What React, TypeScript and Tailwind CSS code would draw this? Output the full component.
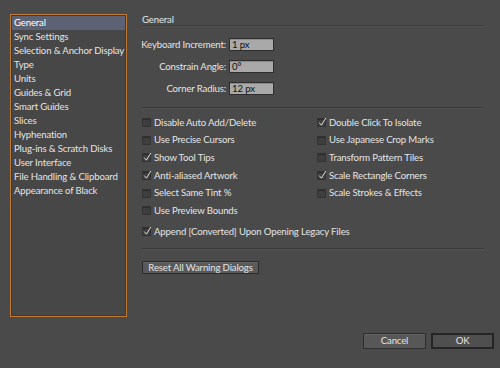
import React from "react";

const cats = [
  "General",
  "Sync Settings",
  "Selection & Anchor Display",
  "Type",
  "Units",
  "Guides & Grid",
  "Smart Guides",
  "Slices",
  "Hyphenation",
  "Plug-ins & Scratch Disks",
  "User Interface",
  "File Handling & Clipboard",
  "Appearance of Black",
];

const left = [
  { t: "Disable Auto Add/Delete", c: false },
  { t: "Use Precise Cursors", c: false },
  { t: "Show Tool Tips", c: true },
  { t: "Anti-aliased Artwork", c: true },
  { t: "Select Same Tint %", c: false },
  { t: "Use Preview Bounds", c: false },
];
const right = [
  { t: "Double Click To Isolate", c: true },
  { t: "Use Japanese Crop Marks", c: false },
  { t: "Transform Pattern Tiles", c: false },
  { t: "Scale Rectangle Corners", c: true },
  { t: "Scale Strokes & Effects", c: false },
];

function Check({ label, checked }: { label: string; checked: boolean }) {
  return (
    <div className="flex items-center h-[17.6px] gap-[3px]">
      <div className="relative w-[9px] h-[9px] bg-[#3e3e3e] border border-[#333] shadow-[inset_0_1px_0_#2c2c2c] shrink-0">
        {checked && (
          <svg
            className="absolute left-[0px] top-[-2px]"
            width="9"
            height="10"
            viewBox="0 0 9 10"
          >
            <path d="M1.2 5.6 L3.4 8.2 L7.8 1" fill="none" stroke="#e0e0e0" strokeWidth="1" />
          </svg>
        )}
      </div>
      <span className="whitespace-nowrap">{label}</span>
    </div>
  );
}

function Sep() {
  return <div className="h-[2px] border-t border-[#3a3a3a] border-b border-b-[#525252]" />;
}

function Field({ label, value }: { label: string; value: string }) {
  return (
    <div className="flex items-center h-[13px]">
      <div className="w-[86px] flex justify-end pr-[2px] whitespace-nowrap">{label}</div>
      <div className="ml-[1px] w-[45px] h-[13px] bg-[#a9a9a9] border border-[#2e2e2e] text-[#111] pl-[2px] leading-[11px] shadow-[inset_0_1px_0_#8a8a8a]">
        {value}
      </div>
    </div>
  );
}

export default function App() {
  return (
    <div
      className="w-[500px] h-[368px] bg-[#4a4a4a] text-[#e4e4e4] text-[9.6px] tracking-[-0.15px] leading-[12px] flex flex-col overflow-hidden"
      style={{ fontFamily: "Lato, 'Liberation Sans', sans-serif" }}
    >
      <div className="flex pt-[14px] pl-[10px]">
        <div className="w-[117px] h-[303px] border border-[#c07a33] p-[1px] bg-[#3a3a3a]">
          <div className="h-full bg-[#474747] flex flex-col">
            {cats.map((c, i) => (
              <div
                key={c}
                className={
                  "h-[14px] leading-[14px] pl-[2px] whitespace-nowrap " +
                  (i === 0 ? "bg-[#5c6273] text-white" : "")
                }
              >
                {c}
              </div>
            ))}
          </div>
        </div>
        <div className="ml-[15px] w-[342px] flex flex-col">
          <div className="h-[11px] leading-[11px]">General</div>
          <Sep />
          <div className="mt-[11px] flex flex-col gap-[9px]">
            <Field label="Keyboard Increment:" value="1 px" />
            <Field label="Constrain Angle:" value="0°" />
            <Field label="Corner Radius:" value="12 px" />
          </div>
          <div className="mt-[12px]">
            <Sep />
          </div>
          <div className="mt-[5px] grid grid-cols-[175px_1fr]">
            <div className="flex flex-col">
              {left.map((r) => (
                <Check key={r.t} label={r.t} checked={r.c} />
              ))}
            </div>
            <div className="flex flex-col">
              {right.map((r) => (
                <Check key={r.t} label={r.t} checked={r.c} />
              ))}
            </div>
          </div>
          <div className="mt-[3.4px]">
            <Check label="Append [Converted] Upon Opening Legacy Files" checked={true} />
          </div>
          <div className="mt-[7px]">
            <Sep />
          </div>
          <div className="mt-[11px]">
            <div className="w-[117px] h-[13px] bg-[#595959] border border-[#2b2b2b] text-center leading-[11px] shadow-[inset_0_1px_0_#666]">
              Reset All Warning Dialogs
            </div>
          </div>
        </div>
      </div>
      <div className="mt-[16px] flex justify-end pr-[6px] gap-[5px]">
        <div className="w-[63px] h-[16px] bg-[#575757] border border-[#2e2e2e] text-center leading-[14px] shadow-[inset_0_1px_0_#636363]">
          Cancel
        </div>
        <div className="w-[63px] h-[16px] bg-[#4f4f4f] border-2 border-[#252525] text-center leading-[12px]">
          OK
        </div>
      </div>
    </div>
  );
}
